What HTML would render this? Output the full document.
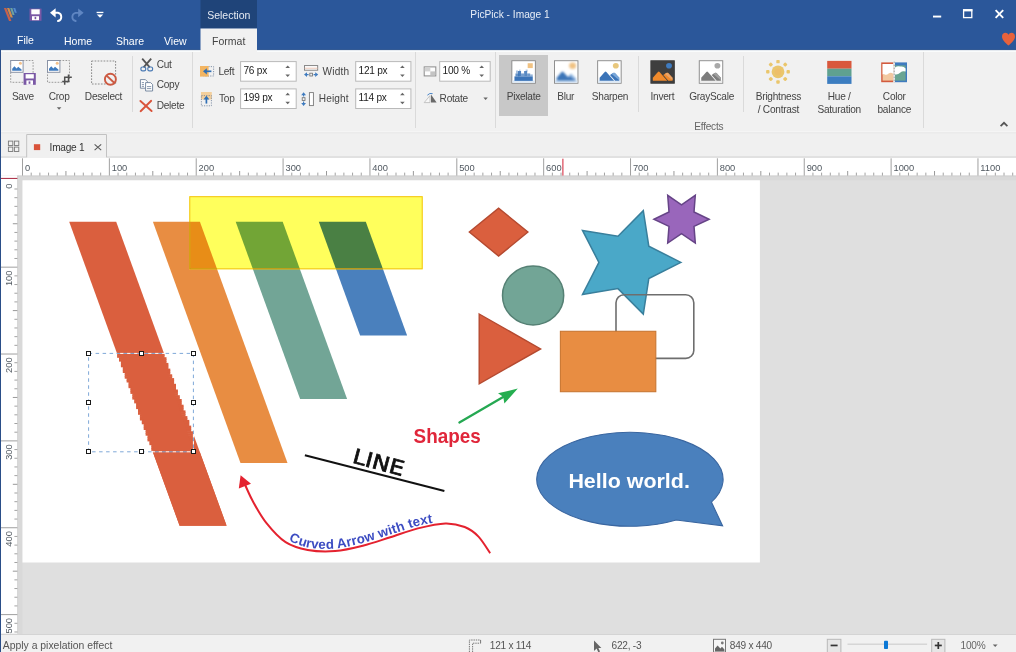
<!DOCTYPE html>
<html lang="en">
<head>
<meta charset="utf-8">
<title>PicPick - Image 1</title>
<style>
*{box-sizing:border-box;margin:0;padding:0}
html,body{width:1016px;height:652px;overflow:hidden;background:#dfdfdf}
body{position:relative;font-family:"Liberation Sans",sans-serif;font-size:10.5px;color:#444;line-height:1}
#app{position:absolute;left:0;top:0;width:1016px;height:652px;overflow:hidden;will-change:transform}
.abs{position:absolute}
.t{position:absolute;white-space:nowrap;line-height:12px;height:12px;letter-spacing:-0.25px}
.c{text-align:center}
#title{left:0;top:0;width:1016px;height:50px;background:#2b579a}
#title svg{z-index:0}
#title .t{z-index:1}
#title .t{color:#fff;letter-spacing:0}
#ribbon{left:0;top:50px;width:1016px;height:83px;background:#f1f1f1}
.sep{position:absolute;width:1px;background:#dadada}
#doctabs{left:0;top:133px;width:1016px;height:25px;background:#f0f0f0}
#status{left:0;top:633.6px;width:1016px;height:19px;background:#f1f1f1;border-top:1px solid #d4d4d4}
#lborder{left:0;top:50px;width:1px;height:602px;background:#2a4e88}
svg{position:absolute;overflow:visible}
svg text{font-family:"Liberation Sans",sans-serif}
.rl{font-size:9.3px;fill:#505860}
</style>
</head>
<body>
<div id="app">
<!-- ======= TITLE BAR ======= -->
<div id="title" class="abs">
  <div class="t c" style="left:200.5px;width:56.5px;top:9px;color:#e6ebf3">Selection</div>
  <div class="t c" style="left:410px;width:200px;top:9px;font-size:10.2px;color:#e8eef7">PicPick - Image 1</div>
  <div class="t" style="left:17px;top:34px">File</div>
  <div class="t" style="left:64px;top:35px">Home</div>
  <div class="t" style="left:116px;top:35px">Share</div>
  <div class="t" style="left:164px;top:35px">View</div>
  <div class="t c" style="left:200.5px;width:56.5px;top:35px;color:#444">Format</div>
  
  <svg width="1016" height="54" viewBox="0 0 1016 54" style="left:0;top:0">
    <rect x="0" y="49.3" width="1016" height="0.7" fill="#254c88"/>
    <rect x="200.5" y="0" width="56.5" height="28.5" fill="#1f4479"/><rect x="200.5" y="28.5" width="56.5" height="24" fill="#f1f1f1"/>
    <!-- app logo -->
    <g opacity="0.88">
      <polygon points="3.9,8 6.3,8 11.4,21 9,21" fill="#de6340"/>
      <polygon points="7,8 9.3,8 12.9,17.6 10.6,17.6" fill="#e8953f"/>
      <polygon points="10.2,8 12.3,8 14.6,15 12.5,15" fill="#79ad9f"/>
      <polygon points="13.2,8 15.2,8 16.8,12.8 14.8,12.8" fill="#5b93d6"/>
    </g>
    <!-- save -->
    <rect x="29.5" y="8.6" width="12" height="12.2" fill="#7a58a5"/>
    <rect x="31.3" y="9.3" width="8.4" height="5" fill="#fff"/>
    <rect x="32" y="16.2" width="7" height="4" fill="#fff"/>
    <rect x="34.6" y="16.8" width="1.6" height="2.4" fill="#7a58a5"/>
    <!-- undo -->
    <path d="M53.3 12.8 H58 a4.2 4.2 0 0 1 0 8.2 h-0.8" fill="none" stroke="#fff" stroke-width="1.9"/>
    <polygon points="50,12.8 55.6,8.2 55.6,17.4" fill="#fff"/>
    <!-- redo -->
    <path d="M80 12.8 H75.6 a4.2 4.2 0 0 0 0 8.2 h0.8" fill="none" stroke="#5f86c2" stroke-width="1.8"/>
    <polygon points="83.6,12.8 78.2,8.4 78.2,17.2" fill="#5f86c2"/>
    <!-- dropdown -->
    <rect x="96.6" y="11.8" width="6.8" height="1.3" fill="#fff"/>
    <polygon points="96.8,14.4 103.2,14.4 100,17.8" fill="#fff"/>
    <!-- window controls -->
    <rect x="933" y="15.6" width="8.2" height="1.9" fill="#fff"/>
    <rect x="963.6" y="9.8" width="8.2" height="7.8" fill="none" stroke="#fff" stroke-width="1.3"/>
    <rect x="963" y="9.2" width="9.4" height="2.2" fill="#fff"/>
    <path d="M995.6 10.2 L1003.2 17.8 M1003.2 10.2 L995.6 17.8" stroke="#fff" stroke-width="1.9" fill="none"/>
    <!-- heart -->
    <path d="M1008.5 45.6 C1005 42.2 1002 39.6 1002 36.4 C1002 34.2 1003.6 32.8 1005.4 32.8 C1006.8 32.8 1007.9 33.6 1008.5 34.8 C1009.1 33.6 1010.2 32.8 1011.6 32.8 C1013.4 32.8 1015 34.2 1015 36.4 C1015 39.6 1012 42.2 1008.5 45.6 Z" fill="#e8623c"/>
  </svg>

</div>

<!-- ======= RIBBON ======= -->
<div id="ribbon" class="abs"></div>
<div class="abs" style="left:499.4px;top:54.5px;width:48.2px;height:61.2px;background:#c8c8c8"></div>
<svg width="1016" height="652" viewBox="0 0 1016 652" style="left:0;top:0">
<defs><filter id="icoblur" x="-20%" y="-20%" width="140%" height="140%"><feGaussianBlur stdDeviation="1"/></filter></defs>
<path d="M1 50.25 H200.5 M257 50.25 H1016" stroke="#93a9cc" stroke-width="0.5"/><path d="M1 51.2 H200.5 M257 51.2 H1016" stroke="#fafcfc" stroke-width="1.4"/>
<rect x="240.6" y="61.6" width="55.6" height="19.6" fill="#fff" stroke="#b9b9b9" stroke-width="1"/>
<polygon points="285.4,68.0 290.0,68.0 287.7,65.4" fill="#666"/><polygon points="285.4,74.4 290.0,74.4 287.7,77.0" fill="#666"/>
<rect x="240.6" y="88.9" width="55.6" height="19.6" fill="#fff" stroke="#b9b9b9" stroke-width="1"/>
<polygon points="285.4,95.3 290.0,95.3 287.7,92.7" fill="#666"/><polygon points="285.4,101.7 290.0,101.7 287.7,104.3" fill="#666"/>
<rect x="355.7" y="61.6" width="55.2" height="19.6" fill="#fff" stroke="#b9b9b9" stroke-width="1"/>
<polygon points="400.1,68.0 404.7,68.0 402.4,65.4" fill="#666"/><polygon points="400.1,74.4 404.7,74.4 402.4,77.0" fill="#666"/>
<rect x="355.7" y="88.9" width="55.2" height="19.6" fill="#fff" stroke="#b9b9b9" stroke-width="1"/>
<polygon points="400.1,95.3 404.7,95.3 402.4,92.7" fill="#666"/><polygon points="400.1,101.7 404.7,101.7 402.4,104.3" fill="#666"/>
<rect x="439.7" y="61.6" width="50.5" height="19.6" fill="#fff" stroke="#b9b9b9" stroke-width="1"/>
<polygon points="479.4,68.0 484.0,68.0 481.7,65.4" fill="#666"/><polygon points="479.4,74.4 484.0,74.4 481.7,77.0" fill="#666"/>
<rect x="10.7" y="60.5" width="22.4" height="21.8" fill="none" stroke="#9c9c9c" stroke-width="1" stroke-dasharray="1.7 1.3"/>
<g transform="translate(10.20 60.00)"><rect x="0.5" y="0.5" width="12.4" height="11.8" fill="#fff" stroke="#8a93a6" stroke-width="1"/><circle cx="10.20" cy="3.3" r="1.5" fill="#f3c08a"/><path d="M2 10.80 V8.80 L4.2 6.20 L6.4 8.60 L8 6.80 L11.40 9.40 V10.80 Z" fill="#3f7bbf"/></g>
<rect x="23.6" y="73" width="12.2" height="11.8" fill="#7a58a5"/><rect x="25.6" y="74.2" width="8.2" height="4.3" fill="#fff"/><rect x="26.4" y="80.4" width="6.6" height="4.4" fill="#fff"/><rect x="28.6" y="81.4" width="1.8" height="2.4" fill="#7a58a5"/>
<rect x="47.5" y="60.5" width="22" height="21.8" fill="none" stroke="#9c9c9c" stroke-width="1" stroke-dasharray="1.7 1.3"/>
<g transform="translate(47.00 60.00)"><rect x="0.5" y="0.5" width="12.4" height="11.8" fill="#fff" stroke="#8a93a6" stroke-width="1"/><circle cx="10.20" cy="3.3" r="1.5" fill="#f3c08a"/><path d="M2 10.80 V8.80 L4.2 6.20 L6.4 8.60 L8 6.80 L11.40 9.40 V10.80 Z" fill="#3f7bbf"/></g>
<path d="M68.5 74.5 V81.6 H62.2 M71.8 77.3 H64.7 V84.8" fill="none" stroke="#505050" stroke-width="1.5"/>
<polygon points="56.8,107.2 61.4,107.2 59.1,109.8" fill="#666"/>
<rect x="91.6" y="61" width="24" height="23" fill="none" stroke="#8c8c8c" stroke-width="1" stroke-dasharray="1.7 1.3"/>
<circle cx="110.4" cy="79.2" r="5.5" fill="#f1f1f1" stroke="#cc5a42" stroke-width="1.9"/><path d="M106.6 75.6 L114.2 82.8" stroke="#cc5a42" stroke-width="1.9"/>
<path d="M142.2 58.6 L149.8 67.4 M151.2 58.6 L143.6 67.4" stroke="#555" stroke-width="1.8" fill="none"/><rect x="140.9" y="67" width="4.8" height="3.8" rx="1.6" fill="none" stroke="#4a7ab4" stroke-width="1.2"/><rect x="147.8" y="67" width="4.8" height="3.8" rx="1.6" fill="none" stroke="#4a7ab4" stroke-width="1.2"/>
<path d="M140.4 79.6 H145.4 L147.4 81.6 V88.2 H140.4 Z" fill="#fff" stroke="#6c7f99" stroke-width="0.9"/><path d="M145.6 82.6 H150.6 L152.6 84.6 V91 H145.6 Z" fill="#fff" stroke="#6c7f99" stroke-width="0.9"/><path d="M141.8 82.6 H144 M141.8 84.6 H144 M141.8 86.4 H144 M147 86.6 H151.2 M147 88.6 H151.2" stroke="#6c7f99" stroke-width="0.8"/>
<path d="M140.4 101 L151.6 111 M151.2 100.8 L140.6 111.2" stroke="#d9533a" stroke-width="1.9" fill="none" stroke-linecap="round"/>
<rect x="203.6" y="66.6" width="10" height="9.4" fill="none" stroke="#6c7f99" stroke-width="0.8" stroke-dasharray="1.2 1.2"/><rect x="200" y="66" width="8.6" height="10.6" fill="#f3b562"/><path d="M211.4 71.3 H205.6" stroke="#2f6fb5" stroke-width="1.7"/><polygon points="203,71.3 206.8,68.2 206.8,74.4" fill="#2f6fb5"/>
<rect x="201" y="92" width="10.8" height="7.4" fill="#f3cf9c"/><rect x="201.4" y="95.6" width="10" height="10.2" fill="none" stroke="#6c7f99" stroke-width="0.8" stroke-dasharray="1.2 1.2"/><path d="M206.4 103.6 V98.6" stroke="#2f6fb5" stroke-width="1.7"/><polygon points="206.4,95.8 203.4,99.6 209.4,99.6" fill="#2f6fb5"/>
<rect x="304.5" y="65.6" width="13.2" height="4.6" fill="#fff" stroke="#7a7a7a" stroke-width="0.9"/><path d="M304.6 68.2 H317.6" stroke="#e8b9a4" stroke-width="0.8"/><polygon points="304,74.6 307,72.2 307,77" fill="#3f7bbf"/><polygon points="318.2,74.6 315.2,72.2 315.2,77" fill="#3f7bbf"/><path d="M306.6 74.6 H308.6 M313.6 74.6 H315.6" stroke="#3f7bbf" stroke-width="1.1"/><rect x="309.8" y="73.2" width="2.8" height="2.8" fill="none" stroke="#6a6a6a" stroke-width="0.8"/>
<rect x="309.4" y="92.6" width="4" height="13" fill="#fff" stroke="#7a7a7a" stroke-width="0.9"/><polygon points="303.6,92.2 301.2,95.2 306,95.2" fill="#3f7bbf"/><polygon points="303.6,106 301.2,103 306,103" fill="#3f7bbf"/><path d="M303.6 94.8 V96.6 M303.6 101.6 V103.4" stroke="#3f7bbf" stroke-width="1.1"/><rect x="302.2" y="97.7" width="2.8" height="2.8" fill="none" stroke="#6a6a6a" stroke-width="0.8"/>
<rect x="424.2" y="66.9" width="11.6" height="9" fill="#fdfdfd" stroke="#8a8a8a" stroke-width="1"/><rect x="424.7" y="67.4" width="5.6" height="4" fill="#d2d2d2"/><rect x="430.3" y="71.4" width="5" height="4" fill="#c4c4c4"/>
<polygon points="424.2,102.6 430,102.6 430,95.6" fill="#f7f7f7" stroke="#b0b0b0" stroke-width="0.7"/><polygon points="431,102.6 436.6,102.6 431,94.6" fill="#6a6a6a"/><path d="M427.4 95.2 Q429.6 92.6 432.6 93.6" fill="none" stroke="#4a86c8" stroke-width="1"/>
<polygon points="483.4,97.4 487.8,97.4 485.6,99.9" fill="#666"/>
<g transform="translate(511.40 60.30) scale(1.017 0.975)"><rect x="0.45" y="0.45" width="23.1" height="23.1" fill="#fff" stroke="#858585" stroke-width="0.9"/><rect x="1" y="20.6" width="22" height="2.4" fill="#dbe8f6"/><rect x="16" y="3" width="5" height="5" fill="#f0c283"/><rect x="3" y="16.5" width="18" height="4.6" fill="#3b74b8" opacity="1"/><rect x="4" y="13.5" width="4" height="3" fill="#3b74b8" opacity="0.8"/><rect x="6.5" y="11" width="3" height="5.5" fill="#3b74b8" opacity="0.9"/><rect x="9.5" y="13.5" width="3" height="3" fill="#3b74b8" opacity="0.7"/><rect x="12.5" y="11" width="3" height="5.5" fill="#3b74b8" opacity="0.85"/><rect x="15.5" y="13.5" width="3" height="3" fill="#3b74b8" opacity="0.75"/><rect x="18.5" y="14.5" width="2.5" height="2" fill="#3b74b8" opacity="0.55"/><rect x="4.5" y="10.5" width="2" height="3" fill="#3b74b8" opacity="0.45"/><rect x="14" y="9.5" width="2" height="2" fill="#3b74b8" opacity="0.4"/><rect x="7.5" y="9.5" width="1.5" height="1.5" fill="#3b74b8" opacity="0.35"/></g>
<g transform="translate(554.00 60.30) scale(1.017 0.975)"><rect x="0.45" y="0.45" width="23.1" height="23.1" fill="#fff" stroke="#858585" stroke-width="0.9"/><rect x="1" y="20.6" width="22" height="2.4" fill="#dbe8f6"/><circle cx="18.3" cy="5.6" r="3.4" fill="#f0c283" filter="url(#icoblur)"/><g filter="url(#icoblur)"><path d="M2.6 21 V18 L7.5 12 Q8.3 11.2 9.1 12 L14 17.4 L15.8 14.6 Q16.7 13.8 17.6 14.6 L21.5 18.8 V21 Z" fill="#3b74b8"/><path d="M14.4 15.2 L15.8 14.6 Q16.7 13.8 17.6 14.6 L21.5 18.8 V20.6 Z" fill="#9cc0e6"/></g></g>
<g transform="translate(597.20 60.30) scale(1.017 0.975)"><rect x="0.45" y="0.45" width="23.1" height="23.1" fill="#fff" stroke="#858585" stroke-width="0.9"/><rect x="1" y="20.6" width="22" height="2.4" fill="#dbe8f6"/><circle cx="18.3" cy="5.6" r="2.9" fill="#e8c77c"/><path d="M2.4 21 V18 L7.4 12 Q8.2 11.2 9 12 L16.6 21 Z" fill="#3b74b8"/><path d="M12.6 15.2 L15.6 13 Q16.5 12.4 17.4 13 L21.7 17.8 V21 H17.6 Z" fill="#3b74b8"/><path d="M14.2 14 L15.6 13 Q16.5 12.4 17.4 13 L21.7 17.8 V20.4 Z" fill="#7aa7d8"/></g>
<g transform="translate(650.40 60.30) scale(1.017 0.975)"><rect x="0.45" y="0.45" width="23.1" height="23.1" fill="#3e3e3e" stroke="#3e3e3e" stroke-width="0.9"/><rect x="1" y="20.6" width="22" height="2.4" fill="#3e3e3e"/><circle cx="18.3" cy="5.6" r="2.9" fill="#3f7bbf"/><path d="M2.4 21 V18 L7.4 12 Q8.2 11.2 9 12 L16.6 21 Z" fill="#f08a2c"/><path d="M12.6 15.2 L15.6 13 Q16.5 12.4 17.4 13 L21.7 17.8 V21 H17.6 Z" fill="#f08a2c"/><path d="M14.2 14 L15.6 13 Q16.5 12.4 17.4 13 L21.7 17.8 V20.4 Z" fill="#e9a367"/></g>
<g transform="translate(698.80 60.30) scale(1.017 0.975)"><rect x="0.45" y="0.45" width="23.1" height="23.1" fill="#fff" stroke="#858585" stroke-width="0.9"/><rect x="1" y="20.6" width="22" height="2.4" fill="#ececec"/><circle cx="18.3" cy="5.6" r="2.9" fill="#a8a8a8"/><path d="M2.4 21 V18 L7.4 12 Q8.2 11.2 9 12 L16.6 21 Z" fill="#7c7c7c"/><path d="M12.6 15.2 L15.6 13 Q16.5 12.4 17.4 13 L21.7 17.8 V21 H17.6 Z" fill="#7c7c7c"/><path d="M14.2 14 L15.6 13 Q16.5 12.4 17.4 13 L21.7 17.8 V20.4 Z" fill="#a0a0a0"/></g>
<circle cx="778" cy="71.8" r="6.4" fill="#eac66c"/><circle cx="778" cy="71.8" r="3.4" fill="#edbf6a"/><rect x="786.50" y="70.10" width="3.4" height="3.4" rx="0.9" fill="#eac66c" transform="rotate(0 788.20 71.80)"/><rect x="783.51" y="77.31" width="3.4" height="3.4" rx="0.9" fill="#eac66c" transform="rotate(45 785.21 79.01)"/><rect x="776.30" y="80.30" width="3.4" height="3.4" rx="0.9" fill="#eac66c" transform="rotate(90 778.00 82.00)"/><rect x="769.09" y="77.31" width="3.4" height="3.4" rx="0.9" fill="#eac66c" transform="rotate(135 770.79 79.01)"/><rect x="766.10" y="70.10" width="3.4" height="3.4" rx="0.9" fill="#eac66c" transform="rotate(180 767.80 71.80)"/><rect x="769.09" y="62.89" width="3.4" height="3.4" rx="0.9" fill="#eac66c" transform="rotate(225 770.79 64.59)"/><rect x="776.30" y="59.90" width="3.4" height="3.4" rx="0.9" fill="#eac66c" transform="rotate(270 778.00 61.60)"/><rect x="783.51" y="62.89" width="3.4" height="3.4" rx="0.9" fill="#eac66c" transform="rotate(315 785.21 64.59)"/>
<rect x="827.2" y="60.9" width="24.3" height="7.8" fill="#d9583c"/><rect x="827.2" y="68.7" width="24.3" height="7.6" fill="#5fa190"/><rect x="827.2" y="76.3" width="24.3" height="7.6" fill="#3c7dc0"/>
<rect x="881.2" y="62.4" width="12.2" height="19.8" fill="#d25a3e"/><rect x="895" y="62.4" width="12" height="19.8" fill="#3f7bbf"/><rect x="882.6" y="64" width="10.8" height="16.6" fill="#f2c8a0"/><rect x="895" y="65.4" width="10.6" height="15.2" fill="#6aa592"/><path d="M882.6 64 H893.4 V74 Q891 71.6 888.6 73.4 Q886.6 75.4 884.8 74.4 Q883.4 73.6 882.6 74.6 Z" fill="#fff"/><path d="M895 67.6 Q897.6 65.6 900.4 66.6 Q903.6 66 905.6 68.4 V71.6 Q902.4 70.6 900.4 72.6 Q897.8 75 895 74.4 Z" fill="#fff"/><path d="M894.2 61.6 V83" stroke="#f1f1f1" stroke-width="1.6"/><path d="M894.2 61.6 V83" stroke="#8a8a8a" stroke-width="0.8" stroke-dasharray="1.6 1.4"/>
<path d="M1000.6 126.2 L1004 122.8 L1007.4 126.2" fill="none" stroke="#555" stroke-width="1.7"/>
</svg>
<div class="sep" style="left:132.4px;top:56px;height:56px"></div>
<div class="sep" style="left:192.4px;top:52px;height:76px"></div>
<div class="sep" style="left:415.4px;top:52px;height:76px"></div>
<div class="sep" style="left:495.4px;top:52px;height:76px"></div>
<div class="sep" style="left:638.4px;top:56px;height:55.5px"></div>
<div class="sep" style="left:743.4px;top:56px;height:55.5px"></div>
<div class="sep" style="left:923.4px;top:52px;height:76px"></div>
<div class="t" style="top:91px;left:-37.1px;width:120px;text-align:center;font-size:10.1px;">Save</div>
<div class="t" style="top:91px;left:-0.9px;width:120px;text-align:center;font-size:10.1px;">Crop</div>
<div class="t" style="top:91px;left:43.5px;width:120px;text-align:center;font-size:10.1px;">Deselect</div>
<div class="t" style="top:91px;left:463.7px;width:120px;text-align:center;font-size:10.1px;">Pixelate</div>
<div class="t" style="top:91px;left:505.7px;width:120px;text-align:center;font-size:10.1px;">Blur</div>
<div class="t" style="top:91px;left:550.0px;width:120px;text-align:center;font-size:10.1px;">Sharpen</div>
<div class="t" style="top:91px;left:602.4px;width:120px;text-align:center;font-size:10.1px;">Invert</div>
<div class="t" style="top:91px;left:651.6px;width:120px;text-align:center;font-size:10.1px;">GrayScale</div>
<div class="t" style="top:91px;left:718.4px;width:120px;text-align:center;font-size:10.1px;">Brightness</div>
<div class="t" style="top:91px;left:779.2px;width:120px;text-align:center;font-size:10.1px;">Hue /</div>
<div class="t" style="top:91px;left:834.3px;width:120px;text-align:center;font-size:10.1px;">Color</div>
<div class="t" style="top:104px;left:718.4px;width:120px;text-align:center;font-size:10.1px;">/ Contrast</div>
<div class="t" style="top:104px;left:779.2px;width:120px;text-align:center;font-size:10.1px;">Saturation</div>
<div class="t" style="top:104px;left:834.3px;width:120px;text-align:center;font-size:10.1px;">balance</div>
<div class="t" style="top:121px;left:648.8px;width:120px;text-align:center;color:#666;font-size:10.1px;">Effects</div>
<div class="t" style="top:59px;left:156.7px;font-size:10.1px;">Cut</div>
<div class="t" style="top:79px;left:156.7px;font-size:10.1px;">Copy</div>
<div class="t" style="top:100px;left:156.7px;font-size:10.1px;">Delete</div>
<div class="t" style="top:66px;left:218.4px;font-size:10.1px;">Left</div>
<div class="t" style="top:93px;left:219.0px;font-size:10.1px;">Top</div>
<div class="t" style="top:66px;left:322.6px;font-size:10.1px;letter-spacing:0.15px;">Width</div>
<div class="t" style="top:93px;left:318.8px;font-size:10.1px;letter-spacing:0.1px;">Height</div>
<div class="t" style="top:93px;left:439.6px;font-size:10.1px;">Rotate</div>
<div class="t" style="top:65px;left:243.5px;color:#222;font-size:10.1px;">76 px</div>
<div class="t" style="top:92px;left:243.5px;color:#222;font-size:10.1px;">199 px</div>
<div class="t" style="top:65px;left:358.6px;color:#222;font-size:10.1px;">121 px</div>
<div class="t" style="top:92px;left:358.6px;color:#222;font-size:10.1px;">114 px</div>
<div class="t" style="top:65px;left:442.6px;color:#222;font-size:10.1px;">100 %</div>


<!-- ======= DOCUMENT TABS ======= -->
<div id="doctabs" class="abs"></div>
<svg width="1016" height="652" viewBox="0 0 1016 652" style="left:0;top:0">
<rect x="0" y="131.4" width="1016" height="1" fill="#f7f7f7"/><rect x="0" y="132.4" width="1016" height="0.9" fill="#e6e6e6"/>
<path d="M26.7 157.7 V134.5 H106.5 V157.7" fill="none" stroke="#c2c2c2" stroke-width="1"/>
<path d="M0 157.2 H26.7 M106.5 157.2 H1016" fill="none" stroke="#c2c2c2" stroke-width="1"/>
<rect x="8.4" y="141.1" width="4.4" height="4.4" fill="none" stroke="#787878" stroke-width="0.9"/>
<rect x="14.4" y="141.1" width="4.4" height="4.4" fill="none" stroke="#787878" stroke-width="0.9"/>
<rect x="8.4" y="147.1" width="4.4" height="4.4" fill="none" stroke="#787878" stroke-width="0.9"/>
<rect x="14.4" y="147.1" width="4.4" height="4.4" fill="none" stroke="#787878" stroke-width="0.9"/>
<rect x="33.9" y="144.2" width="6.3" height="5.9" fill="#d9533a"/>
<path d="M94.6 144.4 L101.2 150.2 M101.2 144.4 L94.6 150.2" stroke="#5a5a5a" stroke-width="1.1" fill="none"/>
</svg>
<div class="t" style="top:142px;left:49.6px;color:#333;font-size:10.1px;">Image 1</div>

<!-- ======= WORKSPACE ======= -->
<svg width="1016" height="652" viewBox="0 0 1016 652" style="left:0;top:0">
<rect x="0" y="157.7" width="1016" height="475.9" fill="#dfdfdf"/>
<rect x="0" y="157.7" width="1016" height="17.9" fill="#fff"/>
<rect x="0" y="175.6" width="17.4" height="458.0" fill="#fff"/>
<rect x="17.4" y="175.6" width="1016" height="1" fill="#c9c9c9"/>
<rect x="17.4" y="175.6" width="1" height="458.0" fill="#c9c9c9"/>
<rect x="18.4" y="176.6" width="1016" height="3.7" fill="#d9d9d9"/>
<rect x="18.4" y="176.6" width="4.1" height="458.0" fill="#d9d9d9"/>
<rect x="22.5" y="180.3" width="737.4" height="382.2" fill="#fff"/>
<rect x="22.00" y="158.3" width="1" height="17.3" fill="#a0a0a0"/>
<text x="24.90" y="170.7" class="rl">0</text>
<rect x="30.69" y="172.6" width="1" height="3" fill="#a2a2a2"/>
<rect x="39.37" y="172.6" width="1" height="3" fill="#a2a2a2"/>
<rect x="48.06" y="172.6" width="1" height="3" fill="#a2a2a2"/>
<rect x="56.74" y="172.6" width="1" height="3" fill="#a2a2a2"/>
<rect x="65.43" y="171.0" width="1" height="4.6" fill="#999"/>
<rect x="74.12" y="172.6" width="1" height="3" fill="#a2a2a2"/>
<rect x="82.80" y="172.6" width="1" height="3" fill="#a2a2a2"/>
<rect x="91.49" y="172.6" width="1" height="3" fill="#a2a2a2"/>
<rect x="100.17" y="172.6" width="1" height="3" fill="#a2a2a2"/>
<rect x="108.86" y="158.3" width="1" height="17.3" fill="#a0a0a0"/>
<text x="111.76" y="170.7" class="rl">100</text>
<rect x="117.55" y="172.6" width="1" height="3" fill="#a2a2a2"/>
<rect x="126.23" y="172.6" width="1" height="3" fill="#a2a2a2"/>
<rect x="134.92" y="172.6" width="1" height="3" fill="#a2a2a2"/>
<rect x="143.60" y="172.6" width="1" height="3" fill="#a2a2a2"/>
<rect x="152.29" y="171.0" width="1" height="4.6" fill="#999"/>
<rect x="160.98" y="172.6" width="1" height="3" fill="#a2a2a2"/>
<rect x="169.66" y="172.6" width="1" height="3" fill="#a2a2a2"/>
<rect x="178.35" y="172.6" width="1" height="3" fill="#a2a2a2"/>
<rect x="187.03" y="172.6" width="1" height="3" fill="#a2a2a2"/>
<rect x="195.72" y="158.3" width="1" height="17.3" fill="#a0a0a0"/>
<text x="198.62" y="170.7" class="rl">200</text>
<rect x="204.41" y="172.6" width="1" height="3" fill="#a2a2a2"/>
<rect x="213.09" y="172.6" width="1" height="3" fill="#a2a2a2"/>
<rect x="221.78" y="172.6" width="1" height="3" fill="#a2a2a2"/>
<rect x="230.46" y="172.6" width="1" height="3" fill="#a2a2a2"/>
<rect x="239.15" y="171.0" width="1" height="4.6" fill="#999"/>
<rect x="247.84" y="172.6" width="1" height="3" fill="#a2a2a2"/>
<rect x="256.52" y="172.6" width="1" height="3" fill="#a2a2a2"/>
<rect x="265.21" y="172.6" width="1" height="3" fill="#a2a2a2"/>
<rect x="273.89" y="172.6" width="1" height="3" fill="#a2a2a2"/>
<rect x="282.58" y="158.3" width="1" height="17.3" fill="#a0a0a0"/>
<text x="285.48" y="170.7" class="rl">300</text>
<rect x="291.27" y="172.6" width="1" height="3" fill="#a2a2a2"/>
<rect x="299.95" y="172.6" width="1" height="3" fill="#a2a2a2"/>
<rect x="308.64" y="172.6" width="1" height="3" fill="#a2a2a2"/>
<rect x="317.32" y="172.6" width="1" height="3" fill="#a2a2a2"/>
<rect x="326.01" y="171.0" width="1" height="4.6" fill="#999"/>
<rect x="334.70" y="172.6" width="1" height="3" fill="#a2a2a2"/>
<rect x="343.38" y="172.6" width="1" height="3" fill="#a2a2a2"/>
<rect x="352.07" y="172.6" width="1" height="3" fill="#a2a2a2"/>
<rect x="360.75" y="172.6" width="1" height="3" fill="#a2a2a2"/>
<rect x="369.44" y="158.3" width="1" height="17.3" fill="#a0a0a0"/>
<text x="372.34" y="170.7" class="rl">400</text>
<rect x="378.13" y="172.6" width="1" height="3" fill="#a2a2a2"/>
<rect x="386.81" y="172.6" width="1" height="3" fill="#a2a2a2"/>
<rect x="395.50" y="172.6" width="1" height="3" fill="#a2a2a2"/>
<rect x="404.18" y="172.6" width="1" height="3" fill="#a2a2a2"/>
<rect x="412.87" y="171.0" width="1" height="4.6" fill="#999"/>
<rect x="421.56" y="172.6" width="1" height="3" fill="#a2a2a2"/>
<rect x="430.24" y="172.6" width="1" height="3" fill="#a2a2a2"/>
<rect x="438.93" y="172.6" width="1" height="3" fill="#a2a2a2"/>
<rect x="447.61" y="172.6" width="1" height="3" fill="#a2a2a2"/>
<rect x="456.30" y="158.3" width="1" height="17.3" fill="#a0a0a0"/>
<text x="459.20" y="170.7" class="rl">500</text>
<rect x="464.99" y="172.6" width="1" height="3" fill="#a2a2a2"/>
<rect x="473.67" y="172.6" width="1" height="3" fill="#a2a2a2"/>
<rect x="482.36" y="172.6" width="1" height="3" fill="#a2a2a2"/>
<rect x="491.04" y="172.6" width="1" height="3" fill="#a2a2a2"/>
<rect x="499.73" y="171.0" width="1" height="4.6" fill="#999"/>
<rect x="508.42" y="172.6" width="1" height="3" fill="#a2a2a2"/>
<rect x="517.10" y="172.6" width="1" height="3" fill="#a2a2a2"/>
<rect x="525.79" y="172.6" width="1" height="3" fill="#a2a2a2"/>
<rect x="534.47" y="172.6" width="1" height="3" fill="#a2a2a2"/>
<rect x="543.16" y="158.3" width="1" height="17.3" fill="#a0a0a0"/>
<text x="546.06" y="170.7" class="rl">600</text>
<rect x="551.85" y="172.6" width="1" height="3" fill="#a2a2a2"/>
<rect x="560.53" y="172.6" width="1" height="3" fill="#a2a2a2"/>
<rect x="569.22" y="172.6" width="1" height="3" fill="#a2a2a2"/>
<rect x="577.90" y="172.6" width="1" height="3" fill="#a2a2a2"/>
<rect x="586.59" y="171.0" width="1" height="4.6" fill="#999"/>
<rect x="595.28" y="172.6" width="1" height="3" fill="#a2a2a2"/>
<rect x="603.96" y="172.6" width="1" height="3" fill="#a2a2a2"/>
<rect x="612.65" y="172.6" width="1" height="3" fill="#a2a2a2"/>
<rect x="621.33" y="172.6" width="1" height="3" fill="#a2a2a2"/>
<rect x="630.02" y="158.3" width="1" height="17.3" fill="#a0a0a0"/>
<text x="632.92" y="170.7" class="rl">700</text>
<rect x="638.71" y="172.6" width="1" height="3" fill="#a2a2a2"/>
<rect x="647.39" y="172.6" width="1" height="3" fill="#a2a2a2"/>
<rect x="656.08" y="172.6" width="1" height="3" fill="#a2a2a2"/>
<rect x="664.76" y="172.6" width="1" height="3" fill="#a2a2a2"/>
<rect x="673.45" y="171.0" width="1" height="4.6" fill="#999"/>
<rect x="682.14" y="172.6" width="1" height="3" fill="#a2a2a2"/>
<rect x="690.82" y="172.6" width="1" height="3" fill="#a2a2a2"/>
<rect x="699.51" y="172.6" width="1" height="3" fill="#a2a2a2"/>
<rect x="708.19" y="172.6" width="1" height="3" fill="#a2a2a2"/>
<rect x="716.88" y="158.3" width="1" height="17.3" fill="#a0a0a0"/>
<text x="719.78" y="170.7" class="rl">800</text>
<rect x="725.57" y="172.6" width="1" height="3" fill="#a2a2a2"/>
<rect x="734.25" y="172.6" width="1" height="3" fill="#a2a2a2"/>
<rect x="742.94" y="172.6" width="1" height="3" fill="#a2a2a2"/>
<rect x="751.62" y="172.6" width="1" height="3" fill="#a2a2a2"/>
<rect x="760.31" y="171.0" width="1" height="4.6" fill="#999"/>
<rect x="769.00" y="172.6" width="1" height="3" fill="#a2a2a2"/>
<rect x="777.68" y="172.6" width="1" height="3" fill="#a2a2a2"/>
<rect x="786.37" y="172.6" width="1" height="3" fill="#a2a2a2"/>
<rect x="795.05" y="172.6" width="1" height="3" fill="#a2a2a2"/>
<rect x="803.74" y="158.3" width="1" height="17.3" fill="#a0a0a0"/>
<text x="806.64" y="170.7" class="rl">900</text>
<rect x="812.43" y="172.6" width="1" height="3" fill="#a2a2a2"/>
<rect x="821.11" y="172.6" width="1" height="3" fill="#a2a2a2"/>
<rect x="829.80" y="172.6" width="1" height="3" fill="#a2a2a2"/>
<rect x="838.48" y="172.6" width="1" height="3" fill="#a2a2a2"/>
<rect x="847.17" y="171.0" width="1" height="4.6" fill="#999"/>
<rect x="855.86" y="172.6" width="1" height="3" fill="#a2a2a2"/>
<rect x="864.54" y="172.6" width="1" height="3" fill="#a2a2a2"/>
<rect x="873.23" y="172.6" width="1" height="3" fill="#a2a2a2"/>
<rect x="881.91" y="172.6" width="1" height="3" fill="#a2a2a2"/>
<rect x="890.60" y="158.3" width="1" height="17.3" fill="#a0a0a0"/>
<text x="893.50" y="170.7" class="rl">1000</text>
<rect x="899.29" y="172.6" width="1" height="3" fill="#a2a2a2"/>
<rect x="907.97" y="172.6" width="1" height="3" fill="#a2a2a2"/>
<rect x="916.66" y="172.6" width="1" height="3" fill="#a2a2a2"/>
<rect x="925.34" y="172.6" width="1" height="3" fill="#a2a2a2"/>
<rect x="934.03" y="171.0" width="1" height="4.6" fill="#999"/>
<rect x="942.72" y="172.6" width="1" height="3" fill="#a2a2a2"/>
<rect x="951.40" y="172.6" width="1" height="3" fill="#a2a2a2"/>
<rect x="960.09" y="172.6" width="1" height="3" fill="#a2a2a2"/>
<rect x="968.77" y="172.6" width="1" height="3" fill="#a2a2a2"/>
<rect x="977.46" y="158.3" width="1" height="17.3" fill="#a0a0a0"/>
<text x="980.36" y="170.7" class="rl">1100</text>
<rect x="986.15" y="172.6" width="1" height="3" fill="#a2a2a2"/>
<rect x="994.83" y="172.6" width="1" height="3" fill="#a2a2a2"/>
<rect x="1003.52" y="172.6" width="1" height="3" fill="#a2a2a2"/>
<rect x="1012.20" y="172.6" width="1" height="3" fill="#a2a2a2"/>
<text transform="translate(11.8 183.70) rotate(-90)" text-anchor="end" class="rl">0</text>
<rect x="14.4" y="188.49" width="3" height="1" fill="#a2a2a2"/>
<rect x="14.4" y="197.17" width="3" height="1" fill="#a2a2a2"/>
<rect x="14.4" y="205.86" width="3" height="1" fill="#a2a2a2"/>
<rect x="14.4" y="214.54" width="3" height="1" fill="#a2a2a2"/>
<rect x="12.8" y="223.23" width="4.6" height="1" fill="#999"/>
<rect x="14.4" y="231.92" width="3" height="1" fill="#a2a2a2"/>
<rect x="14.4" y="240.60" width="3" height="1" fill="#a2a2a2"/>
<rect x="14.4" y="249.29" width="3" height="1" fill="#a2a2a2"/>
<rect x="14.4" y="257.97" width="3" height="1" fill="#a2a2a2"/>
<rect x="1.0" y="266.66" width="16.4" height="1" fill="#a0a0a0"/>
<text transform="translate(11.8 270.56) rotate(-90)" text-anchor="end" class="rl">100</text>
<rect x="14.4" y="275.35" width="3" height="1" fill="#a2a2a2"/>
<rect x="14.4" y="284.03" width="3" height="1" fill="#a2a2a2"/>
<rect x="14.4" y="292.72" width="3" height="1" fill="#a2a2a2"/>
<rect x="14.4" y="301.40" width="3" height="1" fill="#a2a2a2"/>
<rect x="12.8" y="310.09" width="4.6" height="1" fill="#999"/>
<rect x="14.4" y="318.78" width="3" height="1" fill="#a2a2a2"/>
<rect x="14.4" y="327.46" width="3" height="1" fill="#a2a2a2"/>
<rect x="14.4" y="336.15" width="3" height="1" fill="#a2a2a2"/>
<rect x="14.4" y="344.83" width="3" height="1" fill="#a2a2a2"/>
<rect x="1.0" y="353.52" width="16.4" height="1" fill="#a0a0a0"/>
<text transform="translate(11.8 357.42) rotate(-90)" text-anchor="end" class="rl">200</text>
<rect x="14.4" y="362.21" width="3" height="1" fill="#a2a2a2"/>
<rect x="14.4" y="370.89" width="3" height="1" fill="#a2a2a2"/>
<rect x="14.4" y="379.58" width="3" height="1" fill="#a2a2a2"/>
<rect x="14.4" y="388.26" width="3" height="1" fill="#a2a2a2"/>
<rect x="12.8" y="396.95" width="4.6" height="1" fill="#999"/>
<rect x="14.4" y="405.64" width="3" height="1" fill="#a2a2a2"/>
<rect x="14.4" y="414.32" width="3" height="1" fill="#a2a2a2"/>
<rect x="14.4" y="423.01" width="3" height="1" fill="#a2a2a2"/>
<rect x="14.4" y="431.69" width="3" height="1" fill="#a2a2a2"/>
<rect x="1.0" y="440.38" width="16.4" height="1" fill="#a0a0a0"/>
<text transform="translate(11.8 444.28) rotate(-90)" text-anchor="end" class="rl">300</text>
<rect x="14.4" y="449.07" width="3" height="1" fill="#a2a2a2"/>
<rect x="14.4" y="457.75" width="3" height="1" fill="#a2a2a2"/>
<rect x="14.4" y="466.44" width="3" height="1" fill="#a2a2a2"/>
<rect x="14.4" y="475.12" width="3" height="1" fill="#a2a2a2"/>
<rect x="12.8" y="483.81" width="4.6" height="1" fill="#999"/>
<rect x="14.4" y="492.50" width="3" height="1" fill="#a2a2a2"/>
<rect x="14.4" y="501.18" width="3" height="1" fill="#a2a2a2"/>
<rect x="14.4" y="509.87" width="3" height="1" fill="#a2a2a2"/>
<rect x="14.4" y="518.55" width="3" height="1" fill="#a2a2a2"/>
<rect x="1.0" y="527.24" width="16.4" height="1" fill="#a0a0a0"/>
<text transform="translate(11.8 531.14) rotate(-90)" text-anchor="end" class="rl">400</text>
<rect x="14.4" y="535.93" width="3" height="1" fill="#a2a2a2"/>
<rect x="14.4" y="544.61" width="3" height="1" fill="#a2a2a2"/>
<rect x="14.4" y="553.30" width="3" height="1" fill="#a2a2a2"/>
<rect x="14.4" y="561.98" width="3" height="1" fill="#a2a2a2"/>
<rect x="12.8" y="570.67" width="4.6" height="1" fill="#999"/>
<rect x="14.4" y="579.36" width="3" height="1" fill="#a2a2a2"/>
<rect x="14.4" y="588.04" width="3" height="1" fill="#a2a2a2"/>
<rect x="14.4" y="596.73" width="3" height="1" fill="#a2a2a2"/>
<rect x="14.4" y="605.41" width="3" height="1" fill="#a2a2a2"/>
<rect x="1.0" y="614.10" width="16.4" height="1" fill="#a0a0a0"/>
<text transform="translate(11.8 618.00) rotate(-90)" text-anchor="end" class="rl">500</text>
<rect x="14.4" y="622.79" width="3" height="1" fill="#a2a2a2"/>
<rect x="14.4" y="631.47" width="3" height="1" fill="#a2a2a2"/>
<rect x="562.1" y="158.7" width="1.5" height="16.9" fill="#e26a78"/>
<rect x="1.0" y="177.9" width="16.4" height="1.1" fill="#b0384e"/>
</svg>
<svg width="1016" height="652" viewBox="0 0 1016 652" style="left:0;top:0">
<defs><clipPath id="below"><rect x="60" y="451.8" width="200" height="80"/></clipPath><clipPath id="yclip"><rect x="189.3" y="196.2" width="233.4" height="73.1"/></clipPath></defs>
<polygon points="69.2,221.8 116.2,221.8 226.6,525.7 179.6,525.7" fill="#da5f3e"/>
<polygon points="152.9,221.8 199.9,221.8 287.5,462.9 240.5,462.9" fill="#e88d42"/>
<polygon points="235.7,221.8 282.7,221.8 347.1,399.0 300.1,399.0" fill="#72a596"/>
<polygon points="318.8,221.8 365.8,221.8 407.1,335.5 360.1,335.5" fill="#4a80bd"/>
<rect x="189.3" y="196.2" width="233.4" height="73.1" fill="#ffff5c"/>
<g clip-path="url(#yclip)">
<polygon points="69.2,221.8 116.2,221.8 226.6,525.7 179.6,525.7" fill="#da5f16"/>
<polygon points="152.9,221.8 199.9,221.8 287.5,462.9 240.5,462.9" fill="#e88d17"/>
<polygon points="235.7,221.8 282.7,221.8 347.1,399.0 300.1,399.0" fill="#72a536"/>
<polygon points="318.8,221.8 365.8,221.8 407.1,335.5 360.1,335.5" fill="#4a8044"/>
</g>
<rect x="189.8" y="196.7" width="232.4" height="72.1" fill="none" stroke="#f3c316" stroke-width="1"/>
<path d="M189.8 221.8 V268.8 H217 M252.8 268.8 H299.8 M335.9 268.8 H382.9" fill="none" stroke="#a06a10" stroke-opacity="0.45" stroke-width="1"/>
<polygon points="469.3,232 498.6,208.2 527.9,232 498.6,256.1" fill="#da5f3e" stroke="#b54a30" stroke-width="1.4" stroke-linejoin="miter"/>
<ellipse cx="533.1" cy="295.5" rx="30.6" ry="29.4" fill="#72a596" stroke="#558074" stroke-width="1.5"/>
<polygon points="479.2,314 540.6,348.9 479.2,383.8" fill="#da5f3e" stroke="#b54a30" stroke-width="1.4"/>
<polygon points="680.9,262.4 648.8,278.6 643.3,314.1 618.0,288.6 582.5,294.4 598.9,262.4 582.5,230.4 618.0,236.2 643.3,210.7 648.8,246.2" fill="#4aa8c8" stroke="#397f9c" stroke-width="1.5" stroke-linejoin="miter"/>
<polygon points="709.1,219.2 694.0,226.4 695.3,243.1 681.5,233.6 667.7,243.1 669.0,226.4 653.9,219.2 669.0,212.0 667.7,195.3 681.5,204.8 695.3,195.3 694.0,212.0" fill="#9966bb" stroke="#664487" stroke-width="1.5" stroke-linejoin="miter"/>
<rect x="616" y="294.8" width="77.8" height="63.6" rx="8" ry="8" fill="none" stroke="#6e6e6e" stroke-width="1.6"/>
<rect x="560.4" y="331.3" width="95.4" height="60.4" fill="#e88d42" stroke="#c97733" stroke-width="1.1"/>
<path d="M459.4 422.5 L504 396.4" stroke="#25a852" stroke-width="2.3" stroke-linecap="round" fill="none"/>
<polygon points="517.8,388.6 498,393.2 503.2,396.8 504.4,403.6" fill="#25ae50"/>
<text x="413.6" y="443.3" font-size="20.4" font-weight="bold" fill="#e0263a" textLength="67.2" lengthAdjust="spacingAndGlyphs">Shapes</text>
<path d="M304.9 455.2 L444.4 491" stroke="#111" stroke-width="2" fill="none"/>
<text transform="translate(351.4 462.6) rotate(15)" font-size="20.5" fill="#111" stroke="#111" stroke-width="0.7" textLength="52.5" lengthAdjust="spacingAndGlyphs" style="font-family:'DejaVu Sans','Liberation Sans',sans-serif">LINE</text>
<path d="M242.8 479.5 C244.4 483.1 248.7 493.6 252.6 500.8 C256.5 508.0 260.8 516.0 266.3 522.9 C271.8 529.8 278.7 537.7 285.6 542.2 C292.5 546.7 299.4 548.4 307.7 549.9 C316.0 551.4 326.0 551.7 335.2 551.0 C344.4 550.3 353.6 548.0 362.8 545.7 C372.0 543.4 381.1 540.1 390.3 537.2 C399.5 534.3 408.7 530.7 417.9 528.4 C427.1 526.1 437.6 523.6 445.4 523.4 C453.2 523.2 459.2 524.8 464.7 527.0 C470.2 529.2 474.3 532.2 478.5 536.6 C482.7 541.0 488.2 550.4 490.1 553.2" stroke="#e4222f" stroke-width="2" fill="none"/>
<polygon points="240.6,475.3 238.8,488.4 251,483.8" fill="#e4222f"/>
<path id="ctp" d="M283.0 538.4 C287.1 539.9 299.0 545.7 307.7 547.4 C316.4 549.1 326.0 549.1 335.2 548.4 C344.4 547.7 353.6 545.4 362.8 543.1 C372.0 540.8 381.1 537.5 390.3 534.6 C399.5 531.7 409.6 528.0 417.9 525.8 C426.2 523.6 436.3 522.3 440.0 521.6" fill="none" stroke="none"/>
<text font-size="13.3" font-weight="bold" fill="#3c4cc2"><textPath href="#ctp" startOffset="6" textLength="149" lengthAdjust="spacing">Curved Arrow with text</textPath></text>
<path d="M711.4 502.1 L722.6 525.8 L676.3 520.06 A93.2 47 0 1 1 711.4 502.1 Z" fill="#4a80bd" stroke="#3a66a0" stroke-width="1.1" stroke-linejoin="miter"/>
<text x="568.4" y="487.8" font-size="21" font-weight="bold" fill="#fff" textLength="121.5" lengthAdjust="spacingAndGlyphs">Hello world.</text>
<g><rect x="88.6" y="353.4" width="104.8" height="98.4" fill="#fff"/><rect x="117.10" y="353.40" width="47.50" height="2.50" fill="#da5f3e"/><rect x="117.10" y="355.30" width="47.50" height="2.50" fill="#da5f3e"/><rect x="119.00" y="357.20" width="47.50" height="2.50" fill="#da5f3e"/><rect x="119.00" y="359.10" width="47.50" height="2.50" fill="#da5f3e"/><rect x="120.90" y="361.00" width="45.60" height="2.50" fill="#da5f3e"/><rect x="120.90" y="362.90" width="47.50" height="2.50" fill="#da5f3e"/><rect x="120.90" y="364.80" width="47.50" height="2.50" fill="#da5f3e"/><rect x="122.80" y="366.70" width="45.60" height="2.50" fill="#da5f3e"/><rect x="122.80" y="368.60" width="47.50" height="2.50" fill="#da5f3e"/><rect x="122.80" y="370.50" width="47.50" height="2.50" fill="#da5f3e"/><rect x="124.70" y="372.40" width="45.60" height="2.50" fill="#da5f3e"/><rect x="124.70" y="374.30" width="47.50" height="2.50" fill="#da5f3e"/><rect x="124.70" y="376.20" width="47.50" height="2.50" fill="#da5f3e"/><rect x="126.60" y="378.10" width="47.50" height="2.50" fill="#da5f3e"/><rect x="126.60" y="380.00" width="47.50" height="2.50" fill="#da5f3e"/><rect x="128.50" y="381.90" width="45.60" height="2.50" fill="#da5f3e"/><rect x="128.50" y="383.80" width="47.50" height="2.50" fill="#da5f3e"/><rect x="128.50" y="385.70" width="47.50" height="2.50" fill="#da5f3e"/><rect x="130.40" y="387.60" width="45.60" height="2.50" fill="#da5f3e"/><rect x="130.40" y="389.50" width="47.50" height="2.50" fill="#da5f3e"/><rect x="130.40" y="391.40" width="47.50" height="2.50" fill="#da5f3e"/><rect x="132.30" y="393.30" width="45.60" height="2.50" fill="#da5f3e"/><rect x="132.30" y="395.20" width="47.50" height="2.50" fill="#da5f3e"/><rect x="132.30" y="397.10" width="47.50" height="2.50" fill="#da5f3e"/><rect x="134.20" y="399.00" width="47.50" height="2.50" fill="#da5f3e"/><rect x="134.20" y="400.90" width="47.50" height="2.50" fill="#da5f3e"/><rect x="136.10" y="402.80" width="45.60" height="2.50" fill="#da5f3e"/><rect x="136.10" y="404.70" width="47.50" height="2.50" fill="#da5f3e"/><rect x="136.10" y="406.60" width="47.50" height="2.50" fill="#da5f3e"/><rect x="138.00" y="408.50" width="45.60" height="2.50" fill="#da5f3e"/><rect x="138.00" y="410.40" width="47.50" height="2.50" fill="#da5f3e"/><rect x="138.00" y="412.30" width="47.50" height="2.50" fill="#da5f3e"/><rect x="139.90" y="414.20" width="45.60" height="2.50" fill="#da5f3e"/><rect x="139.90" y="416.10" width="47.50" height="2.50" fill="#da5f3e"/><rect x="139.90" y="418.00" width="47.50" height="2.50" fill="#da5f3e"/><rect x="141.80" y="419.90" width="47.50" height="2.50" fill="#da5f3e"/><rect x="141.80" y="421.80" width="47.50" height="2.50" fill="#da5f3e"/><rect x="143.70" y="423.70" width="45.60" height="2.50" fill="#da5f3e"/><rect x="143.70" y="425.60" width="47.50" height="2.50" fill="#da5f3e"/><rect x="143.70" y="427.50" width="47.50" height="2.50" fill="#da5f3e"/><rect x="145.60" y="429.40" width="45.60" height="2.50" fill="#da5f3e"/><rect x="145.60" y="431.30" width="47.50" height="2.50" fill="#da5f3e"/><rect x="145.60" y="433.20" width="47.50" height="2.50" fill="#da5f3e"/><rect x="147.50" y="435.10" width="45.60" height="2.50" fill="#da5f3e"/><rect x="147.50" y="437.00" width="45.90" height="2.50" fill="#da5f3e"/><rect x="147.50" y="438.90" width="45.90" height="2.50" fill="#da5f3e"/><rect x="149.40" y="440.80" width="44.00" height="2.50" fill="#da5f3e"/><rect x="149.40" y="442.70" width="44.00" height="2.50" fill="#da5f3e"/><rect x="151.30" y="444.60" width="42.10" height="2.50" fill="#da5f3e"/><rect x="151.30" y="446.50" width="42.10" height="2.50" fill="#da5f3e"/><rect x="151.30" y="448.40" width="42.10" height="2.50" fill="#da5f3e"/><rect x="153.20" y="450.30" width="40.20" height="2.10" fill="#da5f3e"/><polygon points="119.2,353.4 161.8,353.4 193.4,451.8 154.9,451.8" fill="#da5f3e"/></g>
<polygon points="69.2,221.8 116.2,221.8 226.6,525.7 179.6,525.7" fill="#da5f3e" clip-path="url(#below)"/>
<rect x="88.6" y="353.4" width="104.8" height="98.4" fill="none" stroke="#fff" stroke-width="1" stroke-dasharray="3.5 3.5" stroke-dashoffset="3.5"/>
<rect x="88.6" y="353.4" width="104.8" height="98.4" fill="none" stroke="#7fa8d8" stroke-width="1" stroke-dasharray="3.5 3.5"/>
<rect x="86.5" y="351.5" width="4" height="4" fill="#fff" stroke="#1a1a1a" stroke-width="1"/>
<rect x="139.5" y="351.5" width="4" height="4" fill="#fff" stroke="#1a1a1a" stroke-width="1"/>
<rect x="191.5" y="351.5" width="4" height="4" fill="#fff" stroke="#1a1a1a" stroke-width="1"/>
<rect x="86.5" y="400.5" width="4" height="4" fill="#fff" stroke="#1a1a1a" stroke-width="1"/>
<rect x="191.5" y="400.5" width="4" height="4" fill="#fff" stroke="#1a1a1a" stroke-width="1"/>
<rect x="86.5" y="449.5" width="4" height="4" fill="#fff" stroke="#1a1a1a" stroke-width="1"/>
<rect x="139.5" y="449.5" width="4" height="4" fill="#fff" stroke="#1a1a1a" stroke-width="1"/>
<rect x="191.5" y="449.5" width="4" height="4" fill="#fff" stroke="#1a1a1a" stroke-width="1"/>
</svg>

<!-- ======= STATUS BAR ======= -->
<div id="status" class="abs"></div>
<div class="t" style="top:640px;left:2.8px;color:#555;font-size:10.4px;letter-spacing:0;">Apply a pixelation effect</div>
<div class="t" style="top:640px;left:489.8px;color:#555;font-size:10.1px;">121 x 114</div>
<div class="t" style="top:640px;left:611.6px;color:#555;font-size:10.1px;">622, -3</div>
<div class="t" style="top:640px;left:729.8px;color:#555;font-size:10.1px;">849 x 440</div>
<div class="t" style="top:640px;left:960.6px;color:#666;font-size:10.1px;">100%</div>
<svg width="1016" height="652" viewBox="0 0 1016 652" style="left:0;top:0">
<path d="M469.4 652 V640 H480.6 M472.6 652 V643.2 H480.6" fill="none" stroke="#777" stroke-width="1" stroke-dasharray="1.4 0.9"/><path d="M480.6 640 V643.2" stroke="#777" stroke-width="1"/>
<path d="M594 640.4 V651 L596.6 648.6 L598.4 652.4 L600 651.6 L598.4 648 H601.4 Z" fill="#666"/>
<rect x="713.5" y="639.3" width="12" height="13" fill="#f6f6f6" stroke="#777" stroke-width="1"/><circle cx="722.3" cy="643" r="1.4" fill="#777"/><path d="M715 651.6 V648.6 L717.6 645.6 L720.4 648.4 L722 646.8 L724.4 649.4 V651.6 Z" fill="#666"/>
<rect x="827.3" y="639.3" width="13.6" height="14" fill="#e6e6e6" stroke="#b8b8b8" stroke-width="1"/><rect x="830.6" y="644.6" width="7" height="1.7" fill="#333"/>
<rect x="931.7" y="639.3" width="13.2" height="14" fill="#e6e6e6" stroke="#b8b8b8" stroke-width="1"/><rect x="934.8" y="644.6" width="7" height="1.7" fill="#333"/><rect x="937.45" y="642" width="1.7" height="7" fill="#333"/>
<rect x="847.5" y="643.6" width="79.6" height="1.2" fill="#cfcfcf"/>
<rect x="884" y="640.8" width="4" height="8.2" rx="0.8" fill="#0b78d6"/>
<polygon points="992.8,644.4 997.6,644.4 995.2,647" fill="#666"/>
</svg>
<div id="lborder" class="abs"></div>
</div>
</body>
</html>
